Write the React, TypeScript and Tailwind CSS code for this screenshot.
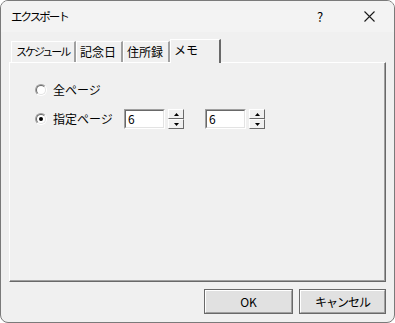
import React from "react";

const font = { fontFamily: '"Noto Sans CJK JP", "Noto Sans", sans-serif' };

function Tab({ label, w, active, tight }: { label: string; w: string; active?: boolean; tight?: boolean }) {
  const t = tight ? "tracking-[-2px] text-[11px] pl-[4px]" : "text-[12px] pl-[3px]";
  if (active) {
    return (
      <div
        className={`${w} h-[24px] -mb-[1px] bg-[#f0f0f0] border-l border-t border-white border-r-2 border-r-[#696969] pt-[1px] relative z-10 leading-[18px] whitespace-nowrap ${t}`}
      >
        {label}
      </div>
    );
  }
  return (
    <div
      className={`${w} h-[21px] border-l border-t border-white border-r-2 border-r-[#a0a0a0] leading-[19px] whitespace-nowrap overflow-hidden ${t}`}
    >
      {label}
    </div>
  );
}

function Radio({ checked }: { checked?: boolean }) {
  return (
    <span className="w-[12px] h-[12px] rounded-full border border-t-[#a0a0a0] border-l-[#a0a0a0] border-r-white border-b-white flex items-center justify-center">
      <span className="w-[10px] h-[10px] rounded-full bg-white border border-t-[#696969] border-l-[#696969] border-r-[#e3e3e3] border-b-[#e3e3e3] flex items-center justify-center">
        {checked && <span className="w-[4px] h-[4px] rounded-full bg-black" />}
      </span>
    </span>
  );
}

function Arrow({ up }: { up?: boolean }) {
  return (
    <div className="flex-1 border border-t-white border-l-white border-r-[#696969] border-b-[#696969] bg-[#f0f0f0] flex items-center justify-center">
      <svg width="5" height="3" viewBox="0 0 5 3">
        {up ? <path d="M2.5 0 L5 3 L0 3 Z" fill="#000" /> : <path d="M0 0 L5 0 L2.5 3 Z" fill="#000" />}
      </svg>
    </div>
  );
}

function Spin({ value }: { value: string }) {
  return (
    <div className="flex items-center gap-[3px]">
      <div className="w-[41px] h-[20px] border border-t-[#a0a0a0] border-l-[#a0a0a0] border-r-white border-b-white">
        <div className="w-full h-full bg-white border border-t-[#696969] border-l-[#696969] border-r-[#e3e3e3] border-b-[#e3e3e3] pl-[2px] text-[12px] leading-[16px]">
          {value}
        </div>
      </div>
      <div className="w-[16px] h-[20px] flex flex-col">
        <Arrow up />
        <Arrow />
      </div>
    </div>
  );
}

function Btn({ label, w, tight }: { label: string; w: string; tight?: boolean }) {
  return (
    <div className={`${w} h-[25px] border border-[#696969] bg-[#e1e1e1] flex items-center justify-center text-[12px]`}>
      <div
        className={`w-full h-full border border-t-white border-l-white border-r-[#a0a0a0] border-b-[#a0a0a0] flex items-center justify-center whitespace-nowrap ${tight ? "tracking-[-1px]" : ""}`}
      >
        {label}
      </div>
    </div>
  );
}

export default function App() {
  return (
    <div className="w-[395px] h-[323px] bg-white">
      <div
        className="w-[395px] h-[323px] rounded-[8px] border border-[#7a7a7a] overflow-hidden bg-[#f0f0f0] flex flex-col text-black"
        style={font}
      >
        <div className="h-[31px] bg-[#f3f3f3] flex items-center pl-[10px] shrink-0">
          <span className="text-[11.5px] tracking-[-2px] whitespace-nowrap">エクスポート</span>
          <span className="ml-auto w-[20px] text-center text-[13px] mr-[34px]">?</span>
          <svg width="11" height="11" viewBox="0 0 11 11" className="mr-[19px]">
            <path d="M0.5 0.5 L10.5 10.5 M10.5 0.5 L0.5 10.5" stroke="#1a1a1a" strokeWidth="1.1" />
          </svg>
        </div>

        <div className="flex-1 flex flex-col px-[8px] pt-[6px]">
          <div className="flex items-end h-[24px] pl-[2px]">
            <Tab label="スケジュール" w="w-[65px]" tight />
            <Tab label="記念日" w="w-[47px]" />
            <Tab label="住所録" w="w-[47px]" />
            <Tab label="メモ" w="w-[51px]" active />
          </div>
          <div className="h-[220px] border-l border-t border-white border-r border-b border-r-[#696969] border-b-[#696969]">
            <div className="h-full border-r border-b border-r-[#a0a0a0] border-b-[#a0a0a0] pl-[25px] pt-[17px] flex flex-col text-[12px]">
              <div className="flex items-center gap-[6px] h-[20px]">
                <Radio />
                <span>全ページ</span>
              </div>
              <div className="flex items-center h-[20px] mt-[9px]">
                <div className="flex items-center gap-[6px] w-[89px]">
                  <Radio checked />
                  <span>指定ページ</span>
                </div>
                <Spin value="6" />
                <div className="w-[21px]" />
                <Spin value="6" />
              </div>
            </div>
          </div>
          <div className="flex justify-end gap-[6px] mt-[7px]">
            <Btn label="OK" w="w-[89px]" />
            <Btn label="キャンセル" w="w-[87px]" tight />
          </div>
        </div>
      </div>
    </div>
  );
}
